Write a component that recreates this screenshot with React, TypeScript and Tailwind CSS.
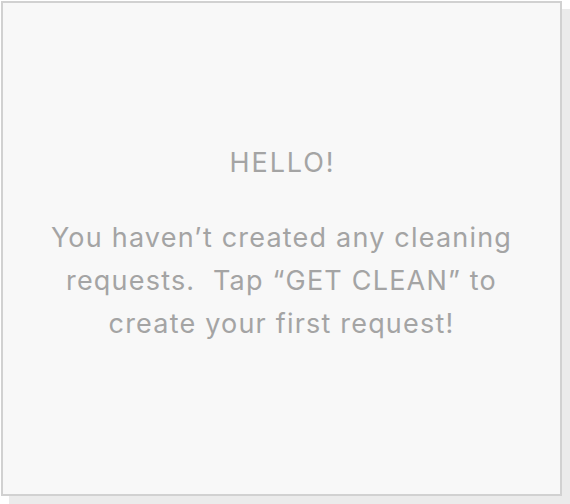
export default function App() {
  return (
    <div className="w-[570px] h-[504px] bg-white pt-px pl-px">
      <div
        className="w-[561px] h-[495px] border-2 border-[#d1d1d1] bg-[#f8f8f8] shadow-[8px_8px_0_0_#ebebeb] flex flex-col items-center pt-[138px] text-[#a4a4a4] text-center text-[27px] leading-[43px] tracking-[1.2px]"
        style={{ fontFamily: 'Inter, "Noto Sans", sans-serif' }}
      >
        <div className="tracking-[1.9px] pl-[2px]">HELLO!</div>
        <p className="mt-[32px] whitespace-pre">
          You haven’t created any cleaning
          <br />
          requests.  Tap “GET CLEAN” to
          <br />
          create your first request!
        </p>
      </div>
    </div>
  );
}
